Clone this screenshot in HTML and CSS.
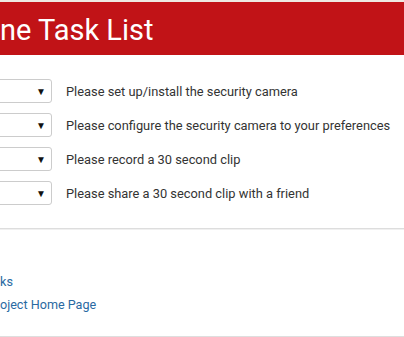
FILE: index.html
```html
<html>
    <head>
        <link rel="stylesheet" href="styles.css">
    </head>
    <body>
        <div class="topline"></div>
        <div class="header">
            <h1 class="title">ne Task List</h1>
        </div>

        <div class="tasks">
            <div class="task">
                <div class="picker"><span class="arrow">&#9660;</span></div>
                <span class="label">Please set up/install the security camera</span>
            </div>
            <div class="task">
                <div class="picker"><span class="arrow">&#9660;</span></div>
                <span class="label">Please configure the security camera to your preferences</span>
            </div>
            <div class="task">
                <div class="picker"><span class="arrow">&#9660;</span></div>
                <span class="label">Please record a 30 second clip</span>
            </div>
            <div class="task">
                <div class="picker"><span class="arrow">&#9660;</span></div>
                <span class="label">Please share a 30 second clip with a friend</span>
            </div>
        </div>

        <div class="rule"></div>

        <div class="links">
            <a href="#">ks</a>
            <a href="#">oject Home Page</a>
        </div>

        <div class="bottombar"></div>
    </body>
</html>
```

FILE: styles.css
```css
body {
    margin: 0;
    font-family: Roboto, "Liberation Sans", sans-serif;
    color: #333333;
    background: #ffffff;
    overflow: hidden;
}

.topline {
    height: 2px;
    background: #eee9e1;
}

.header {
    background: #c11317;
    height: 53px;
    display: flex;
    align-items: center;
}

.title {
    margin: 0;
    color: #ffffff;
    font-size: 29px;
    font-weight: 400;
    line-height: 32px;
    padding-top: 2px;
}

.tasks {
    padding-top: 24px;
    display: flex;
    flex-direction: column;
    gap: 10px;
}

.task {
    display: flex;
    align-items: center;
    height: 24px;
}

.picker {
    box-sizing: border-box;
    width: 92px;
    height: 24px;
    margin-left: -40px;
    border: 1px solid #cccccc;
    border-radius: 3px;
    display: flex;
    align-items: center;
    justify-content: flex-end;
    padding-right: 5px;
}

.arrow {
    font-size: 10px;
    color: #111111;
}

.label {
    margin-left: 14px;
    font-size: 12.85px;
    white-space: nowrap;
}

.rule {
    margin-top: 23px;
    height: 1px;
    background: #dddddd;
    border-bottom: 1px solid #f0f0f0;
}

.links {
    padding-top: 43px;
    display: flex;
    flex-direction: column;
    gap: 6px;
}

.links a {
    color: #2a6aa2;
    text-decoration: none;
    font-size: 12.6px;
    line-height: 17px;
}

.bottombar {
    margin-top: 23px;
    height: 4px;
    background: #dedede;
}
```
